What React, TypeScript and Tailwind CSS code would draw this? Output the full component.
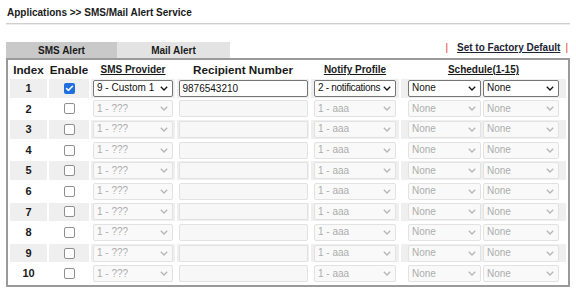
import { Check } from "lucide-react";

const rows = Array.from({ length: 10 }, (_, i) => i + 1);

// fake select box, so the arrow and padding look like the router page
function Sel({ value, width, on, tight }: { value: string; width: string; on: boolean; tight?: boolean }) {
  return (
    <div
      className={`${width} h-[17px] flex items-center justify-between pl-[3px] pr-[4px] rounded-[2px] border text-[10px] leading-none whitespace-nowrap ${
        on ? "bg-white border-[#767676] text-[#111]" : "bg-[#f9f9f9] border-[#e2e2e2] text-[#adadad]"
      }`}
    >
      <span className={tight ? "tracking-[-0.3px]" : ""}>{value}</span>
      <svg width="8" height="5" viewBox="0 0 8 5" className={`shrink-0 ${on ? "text-[#111]" : "text-[#b5b5b5]"}`}>
        <path d="M0.8 0.8 L4 4 L7.2 0.8" fill="none" stroke="currentColor" strokeWidth="1.3" />
      </svg>
    </div>
  );
}

function Box({ checked }: { checked: boolean }) {
  return checked ? (
    <div className="size-[11px] rounded-[2px] bg-[#1f6fe0] flex items-center justify-center">
      <Check className="size-[9px] text-white" strokeWidth={4} />
    </div>
  ) : (
    <div className="size-[11px] rounded-[2px] border border-[#8f8f8f] bg-white" />
  );
}

export default function App() {
  return (
    <div className="w-[576px] h-[289px] bg-white font-['Liberation_Sans',Arial,sans-serif] text-[#1a1a1a] overflow-hidden">
      {/* title */}
      <div className="px-[7px] pt-[7px] text-[10px] font-bold leading-[12px]">Applications &gt;&gt; SMS/Mail Alert Service</div>
      <div className="mx-[6px] mt-[4px] h-px bg-[#cfcfcf] shadow-[0_1px_0_#ececec]" />

      {/* tabs + link */}
      <div className="mt-[16px] mx-[6px] flex items-end justify-between">
        <div className="flex text-[10px] font-bold">
          <div className="w-[111px] h-[16px] bg-[#c9c9c9] flex items-center justify-center">SMS Alert</div>
          <div className="w-[113px] h-[16px] bg-[#e3e3e3] flex items-center justify-center">Mail Alert</div>
        </div>
        <div className="flex items-center text-[10px] font-bold pb-[3px] pr-[2px]">
          <span className="text-[#e0392e] font-normal">|</span>
          <span className="underline text-[#1d2433] ml-[9px] mr-[5px]">Set to Factory Default</span>
          <span className="text-[#e0392e] font-normal">|</span>
        </div>
      </div>

      {/* table */}
      <div className="mx-[6px] w-[564px] border-2 border-[#9a9a9a]">
        <table className="table-fixed border-separate border-spacing-[2px] w-[560px]">
          <colgroup>
            <col className="w-[37px]" />
            <col className="w-[40px]" />
            <col className="w-[84px]" />
            <col className="w-[132px]" />
            <col className="w-[88px]" />
            <col className="w-[165px]" />
          </colgroup>
          <thead>
            <tr className="font-bold h-[15px] leading-[15px]">
              <th className="p-0 text-[11.7px]">Index</th>
              <th className="p-0 text-[11.7px]">Enable</th>
              <th className="p-0 text-[10px] underline">SMS Provider</th>
              <th className="p-0 text-[11.7px]">Recipient Number</th>
              <th className="p-0 text-[10px] underline">Notify Profile</th>
              <th className="p-0 text-[10px] underline">Schedule(1-15)</th>
            </tr>
          </thead>
          <tbody>
            {rows.map((n) => {
              const on = n === 1;
              const bg = n % 2 === 1 ? "bg-[#efefef]" : "bg-white";
              return (
                <tr key={n} className="h-[18.6px]">
                  <td className={`${bg} p-0 text-center text-[11px] font-bold`}>{n}</td>
                  <td className={`${bg} p-0`}>
                    <div className="flex justify-center">
                      <Box checked={on} />
                    </div>
                  </td>
                  <td className={`${bg} p-0`}>
                    <div className="flex justify-center">
                      <Sel value={on ? "9 - Custom 1" : "1 - ???"} width="w-[80px]" on={on} />
                    </div>
                  </td>
                  <td className={`${bg} p-0`}>
                    <div className="flex justify-center">
                      <div
                        className={`w-[129px] h-[17px] flex items-center px-[3px] rounded-[2px] border text-[10px] ${
                          on ? "bg-white border-[#767676] text-[#111]" : "bg-[#f7f7f7] border-[#e2e2e2]"
                        }`}
                      >
                        {on ? "9876543210" : ""}
                      </div>
                    </div>
                  </td>
                  <td className={`${bg} p-0`}>
                    <div className="flex justify-center">
                      <Sel value={on ? "2 - notifications" : "1 - aaa"} width="w-[82px]" on={on} tight={on} />
                    </div>
                  </td>
                  <td className={`${bg} p-0`}>
                    <div className="flex justify-center gap-[2px]">
                      <Sel value="None" width="w-[73px]" on={on} />
                      <Sel value="None" width="w-[76px]" on={on} />
                    </div>
                  </td>
                </tr>
              );
            })}
          </tbody>
        </table>
      </div>
    </div>
  );
}
